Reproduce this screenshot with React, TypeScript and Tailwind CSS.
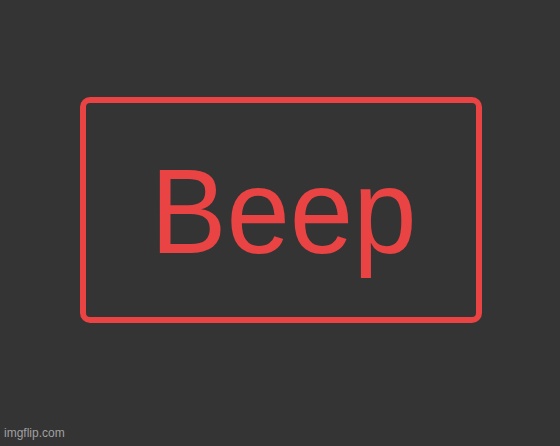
export default function App() {
  return (
    <div className="relative h-[446px] w-[560px] overflow-hidden bg-[#343434] pl-[80px] pt-[97px] font-['Liberation_Sans',Arial,sans-serif]">
      <button
        type="button"
        className="flex h-[226px] w-[402px] items-center justify-center rounded-[10px] border-[6px] border-[#e94343] pl-[5px] pt-[4px] text-[114px] leading-none text-[#e94343]"
      >
        <span className="inline-block scale-y-[1.06]">Beep</span>
      </button>
      <span className="absolute bottom-[4px] left-[4px] text-[12px] text-[#a0a0a0]">imgflip.com</span>
    </div>
  );
}
